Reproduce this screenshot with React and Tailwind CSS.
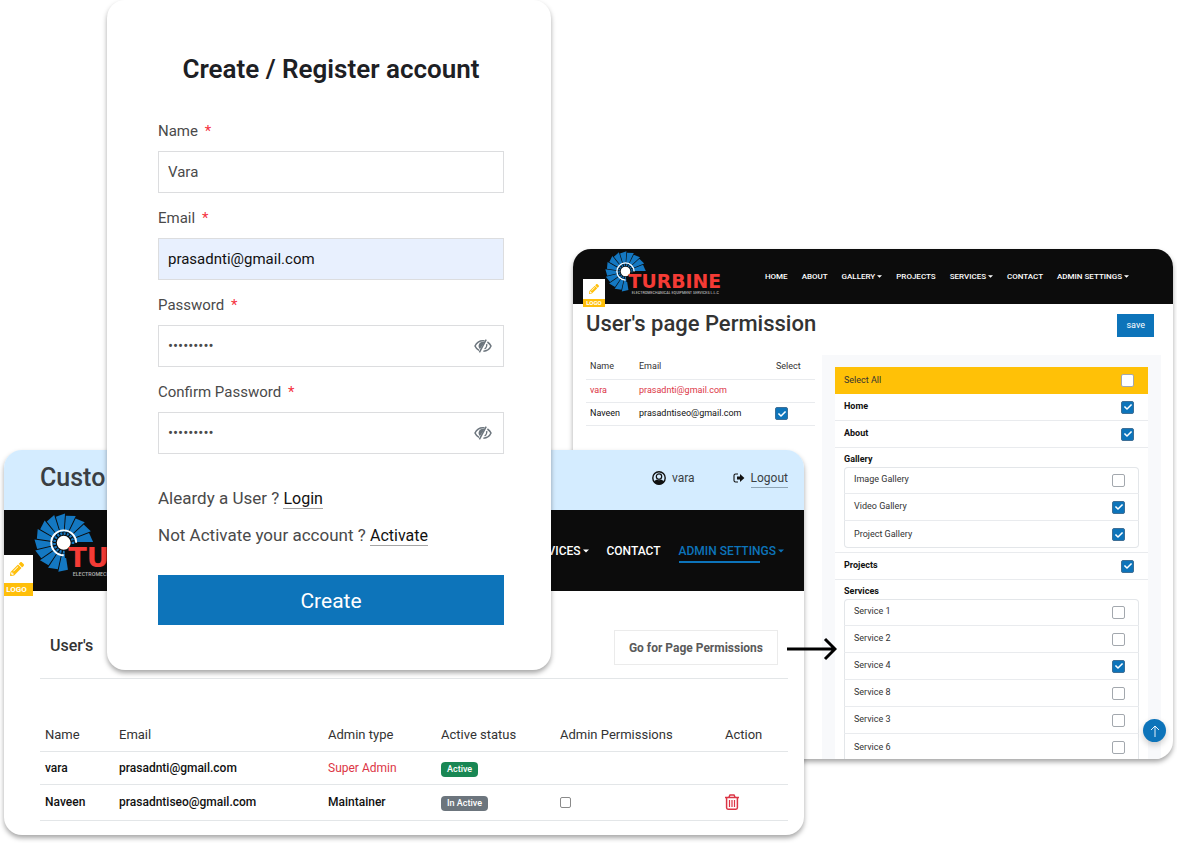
import React, { useState } from 'react';
import { FaCheck, FaPencilAlt } from 'react-icons/fa';

const galleryPages = [
  { name: 'Image Gallery', checked: false },
  { name: 'Video Gallery', checked: true },
  { name: 'Project Gallery', checked: true },
];

const servicePages = [
  { name: 'Service 1', checked: false },
  { name: 'Service 2', checked: false },
  { name: 'Service 4', checked: true },
  { name: 'Service 8', checked: false },
  { name: 'Service 3', checked: false },
  { name: 'Service 6', checked: false },
];

const navLinks = [
  { name: 'HOME' },
  { name: 'ABOUT' },
  { name: 'GALLERY', menu: true },
  { name: 'PROJECTS' },
  { name: 'SERVICES', menu: true },
  { name: 'CONTACT' },
  { name: 'ADMIN SETTINGS', menu: true },
];

const TurbineLogo = ({ className }) => {
  const blades = [];
  for (let i = 0; i < 13; i++) {
    blades.push(
      <path
        key={i}
        d="M262 200 L408 200 L380 138 L259 184 Z"
        transform={`rotate(${-i * 21.5} 205 205)`}
        fill="#1478c2"
      />
    );
  }

  return (
    <svg viewBox="0 0 1180 440" className={className} role="img" aria-label="Turbine">
      {blades}
      <circle cx="205" cy="205" r="76" fill="#0c0c0c" />
      <path d="M205 291 A86 86 0 1 1 291 205" fill="none" stroke="#fff" strokeWidth="13" />
      <circle
        cx="205"
        cy="205"
        r="64"
        fill="none"
        stroke="#1478c2"
        strokeWidth="18"
        strokeDasharray="14 9"
      />
      <path d="M213 213 H310 V310 H213 Z" fill="#0c0c0c" />
      <circle cx="205" cy="205" r="48" fill="#fff" />
      <text
        x="236"
        y="374"
        fontSize="188"
        fontWeight="900"
        fill="#f53b35"
        className="font-['DejaVu_Sans',sans-serif]"
      >
        TURBINE
      </text>
      <text x="267" y="431" fontSize="37" fill="#b5b5b5" className="font-['Roboto',sans-serif]">
        ELECTROMECHANICAL EQUIPMENT SERVICES L.L.C
      </text>
    </svg>
  );
};

const Caret = ({ className }) => (
  <svg viewBox="0 0 8 4" className={className} aria-hidden="true">
    <path d="M0 0 H8 L4 4 Z" fill="currentColor" />
  </svg>
);

const EyeSlash = () => (
  <svg viewBox="0 0 18 14" className="h-[14px] w-[18px]" fill="none" stroke="currentColor" aria-hidden="true">
    <path d="M10.6 2 C9.8 1.8 9.4 1.8 9 1.8 C5 1.8 2.2 4.4 1 7 C1.8 8.9 3.2 10.4 5 11.3" strokeWidth="1.5" />
    <path d="M13.4 3 C15 4 16.3 5.4 17 7 C15.8 9.8 13 12 9.4 12.2" strokeWidth="1.5" />
    <path d="M5.4 4.4 C4 6.2 4.4 8.6 6 10 L10.6 3.2 C8.8 2.6 6.6 2.8 5.4 4.4 Z" fill="currentColor" stroke="none" />
    <path d="M12.2 0.6 L5.4 13.4" strokeWidth="1.5" />
    <path d="M12.8 5 C13 7 12.2 8.8 10.6 10" strokeWidth="1.2" />
  </svg>
);

const TrashIcon = () => (
  <svg viewBox="0 0 14 16" className="h-4 w-[14px]" fill="none" stroke="currentColor" aria-hidden="true">
    <path d="M0 3.5 H14 M4 3 L5 1 H9 L10 3" strokeWidth="1.5" />
    <path d="M1.6 4 V13.8 Q1.6 15.2 3 15.2 H11 Q12.4 15.2 12.4 13.8 V4" strokeWidth="1.5" />
    <path d="M4.5 6 V13 M7 6 V13 M9.5 6 V13" strokeWidth="1.2" />
  </svg>
);

const Tick = ({ label, defaultChecked }) => (
  <span className="grid shrink-0 place-items-center">
    <input
      type="checkbox"
      aria-label={label}
      defaultChecked={defaultChecked}
      className="peer col-start-1 row-start-1 h-[13px] w-[13px] appearance-none rounded-[2px] border border-[#a3a8ae] bg-white checked:border-[#3f6f96] checked:bg-[#0d74ba]"
    />
    <FaCheck className="pointer-events-none invisible col-start-1 row-start-1 h-2 w-2 text-white peer-checked:visible" />
  </span>
);

const Field = ({ id, label, type = 'text', value, filled }) => {
  const [text, setText] = useState(value);
  const [shown, setShown] = useState(false);
  const isPassword = type === 'password';

  return (
    <div className="mb-[13px]">
      <label htmlFor={id} className="mb-2 block text-[15px] leading-6 text-[#4a4a4a]">
        {label} <span className="ml-[3px] text-[#f5333f]">*</span>
      </label>
      <div className="relative">
        <input
          id={id}
          type={isPassword && shown ? 'text' : type}
          value={text}
          onChange={(e) => setText(e.target.value)}
          className={`block h-[42px] w-full border border-[#dcdddf] px-[9px] text-[15px] ${
            filled ? 'bg-[#e8f0fe] text-[#111]' : 'bg-white text-[#4a4a4a]'
          }`}
        />
        {isPassword && (
          <button
            type="button"
            aria-label="Show password"
            onClick={() => setShown(!shown)}
            className="absolute top-[14px] right-3 text-[#6c757d]"
          >
            <EyeSlash />
          </button>
        )}
      </div>
    </div>
  );
};

const RegisterCard = () => (
  <section className="z-20 col-start-3 row-start-1 self-start rounded-[18px] bg-white pt-[53px] pr-[47px] pb-[45px] pl-[51px] shadow-[0_3px_5px_rgba(0,0,0,0.35)]">
    <h1 className="mb-[34px] text-center text-[26px] leading-8 font-semibold text-[#1d2024]">
      Create / Register account
    </h1>
    <form onSubmit={(e) => e.preventDefault()}>
      <Field id="name" label="Name" value="Vara" />
      <Field id="email" label="Email" type="email" value="prasadnti@gmail.com" filled />
      <Field id="password" label="Password" type="password" value="prasadnti" />
      <Field id="confirm" label="Confirm Password" type="password" value="prasadnti" />
      <div className="mt-[26px] text-[17px] leading-9 text-[#4a4a4a]">
        <p>
          Aleardy a User ?{' '}
          <a href="#login" className="border-b border-[#a5a5a5] text-[16px] text-[#111]">Login</a>
        </p>
        <p>
          Not Activate your account ?{' '}
          <a href="#activate" className="border-b border-[#a5a5a5] text-[16px] text-[#111]">Activate</a>
        </p>
      </div>
      <button type="submit" className="mt-[21px] h-[50px] w-full bg-[#0d74ba] pt-[3px] text-[21px] text-white">
        Create
      </button>
    </form>
  </section>
);

const CustomerCard = () => (
  <section className="relative z-10 col-span-4 col-start-2 row-start-1 mt-[450px] self-start rounded-[18px] bg-white pb-[14px] text-[12px] shadow-[0_3px_5px_rgba(0,0,0,0.35)]">
    <header className="flex h-[60px] items-center rounded-t-[18px] bg-[#d4ecff] pr-4 pb-1 pl-9 text-[#3a3f44]">
      <h2 className="mr-auto text-[25px] font-medium">Custo</h2>
      <svg viewBox="0 0 14 14" className="mr-[6px] h-[14px] w-[14px]" aria-hidden="true">
        <circle cx="7" cy="7" r="6.2" fill="#d4ecff" stroke="#111" strokeWidth="1.4" />
        <path d="M1.8 9 C3 13 11 13 12.2 9 L11 12 Q7 15 3 12 Z" fill="#111" />
        <path d="M2.2 10.6 C3.2 9.2 4.4 8.8 5.2 8.6 C6.4 9.4 7.6 9.4 8.8 8.6 C9.6 8.8 10.8 9.2 11.8 10.6 C9.4 13.8 4.6 13.8 2.2 10.6 Z" fill="#111" />
        <circle cx="7" cy="5.6" r="2.7" fill="none" stroke="#111" strokeWidth="1.2" />
      </svg>
      <span className="mr-[38px]">vara</span>
      <svg viewBox="0 0 12 10" className="mr-[6px] h-[10px] w-3" aria-hidden="true">
        <path d="M5 1 H2.6 Q1 1 1 2.6 V7.4 Q1 9 2.6 9 H5" fill="none" stroke="#111" strokeWidth="1.1" />
        <path d="M4 3.4 H7 V1 L11.4 5 L7 9 V6.6 H4 Z" fill="#111" />
      </svg>
      <a href="#logout" className="border-b border-[#8fa5b5]">Logout</a>
    </header>

    <nav className="flex h-[81px] items-center justify-end bg-[#0c0c0c] pr-5 pl-[30px] font-medium text-white">
      <TurbineLogo className="mr-auto mb-3 h-[64px] w-[171px]" />
      <a href="#services" className="mr-[18px] flex items-center gap-[2px]">
        SERVICES <Caret className="h-1 w-[6px]" />
      </a>
      <a href="#contact" className="mr-[18px]">CONTACT</a>
      <a href="#admin" className="flex items-center gap-[2px] text-[#0d74ba]">
        <span className="relative">
          ADMIN SETTINGS
          <span className="absolute -bottom-[3px] left-0 h-[2px] w-5/6 bg-[#0d74ba]" />
        </span>
        <Caret className="h-1 w-[6px]" />
      </a>
    </nav>

    <button type="button" aria-label="Edit logo" className="absolute top-[105px] left-0 w-[29px]">
      <span className="flex h-7 items-center justify-center bg-white pr-1">
        <FaPencilAlt className="h-[14px] w-[14px] text-[#ffbf0a]" />
      </span>
      <span className="block bg-[#ffbf0a] pr-1 text-[8px] leading-[13px] font-bold text-white">LOGO</span>
    </button>

    <div className="pt-[39px] pr-4 pl-9">
      <div className="flex items-center justify-between border-b border-[#e3e6e8] px-[10px] pb-[13px]">
        <h3 className="pb-1 text-[16px] font-medium text-[#333]">User's</h3>
        <button type="button" className="h-[35px] border border-[#ebebeb] px-[14px] font-bold text-[#5a5a5a]">
          Go for Page Permissions
        </button>
      </div>
    </div>

    <div className="pt-[39px] pr-4 pl-9">
      <table className="w-full table-fixed text-left text-[#111]">
        <colgroup>
          <col className="w-[74px]" />
          <col className="w-[209px]" />
          <col className="w-[113px]" />
          <col className="w-[119px]" />
          <col className="w-[165px]" />
          <col />
        </colgroup>
        <thead>
          <tr className="h-[33px] border-b border-[#e3e6e8] text-[13px] text-[#333]">
            <th className="pl-[5px] font-normal">Name</th>
            <th className="pl-[5px] font-normal">Email</th>
            <th className="pl-[5px] font-normal">Admin type</th>
            <th className="pl-[5px] font-normal">Active status</th>
            <th className="pl-[5px] font-normal">Admin Permissions</th>
            <th className="pl-[5px] font-normal">Action</th>
          </tr>
        </thead>
        <tbody className="font-medium">
          <tr className="h-[33px] border-b border-[#e3e6e8]">
            <td className="pl-[5px]">vara</td>
            <td className="pl-[5px]">prasadnti@gmail.com</td>
            <td className="pl-[5px] font-normal text-[#dc3545]">Super Admin</td>
            <td className="pl-[5px]">
              <span className="inline-block rounded-[4px] bg-[#198754] px-[6px] text-[9px] leading-[15px] text-white">Active</span>
            </td>
            <td />
            <td />
          </tr>
          <tr className="h-[36px] border-b border-[#e3e6e8]">
            <td className="pl-[5px]">Naveen</td>
            <td className="pl-[5px]">prasadntiseo@gmail.com</td>
            <td className="pl-[5px]">Maintainer</td>
            <td className="pl-[5px]">
              <span className="inline-block rounded-[4px] bg-[#6c757d] px-[6px] text-[9px] leading-[15px] text-white">In Active</span>
            </td>
            <td className="pl-[5px]">
              <input
                type="checkbox"
                aria-label="Admin permission for Naveen"
                className="block h-[11px] w-[11px] appearance-none rounded-[2px] border border-[#8a8a8a] bg-white checked:bg-[#0d74ba]"
              />
            </td>
            <td className="pl-[5px]">
              <button type="button" aria-label="Delete Naveen" className="block text-[#dc3545]">
                <TrashIcon />
              </button>
            </td>
          </tr>
        </tbody>
      </table>
    </div>

    <svg viewBox="0 0 50 24" className="absolute top-[187px] -right-[33px] h-6 w-[50px]" aria-hidden="true">
      <path d="M0 12 H48 M38 2 L48 12 L38 22" fill="none" stroke="#000" strokeWidth="3" />
    </svg>
  </section>
);

const PageGroup = ({ title, pages, open }) => (
  <div className={`bg-white px-[9px] ${open ? '' : 'border-b border-[#e9ebee] pb-1'}`}>
    <h4 className="pt-[5px] pb-[2px] leading-3 font-bold text-[#111]">{title}</h4>
    <ul className={`ring-1 ring-[#e3e6e9] ring-inset ${open ? '-mb-[2px] rounded-t-[4px]' : 'rounded-[4px]'}`}>
      {pages.map((page) => (
        <li
          key={page.name}
          className="flex h-[27px] items-center justify-between border-b border-[#e9ebee] pr-[14px] pl-[10px] last:border-b-0"
        >
          <span>{page.name}</span>
          <Tick label={page.name} defaultChecked={page.checked} />
        </li>
      ))}
    </ul>
  </div>
);

const PageRow = ({ name }) => (
  <div className="flex h-[27px] items-center justify-between border-b border-[#e9ebee] bg-white pr-[14px] pl-[9px]">
    <span className="font-bold text-[#111]">{name}</span>
    <Tick label={name} defaultChecked />
  </div>
);

const PermissionCard = () => (
  <section className="relative col-span-2 col-start-5 row-start-1 mt-[249px] self-start overflow-hidden rounded-[18px] bg-white text-[9px] text-[#333] shadow-[0_3px_5px_rgba(0,0,0,0.35)]">
    <nav className="flex h-[55px] items-center gap-[14px] bg-[#0c0c0c] pr-[44px] pl-8 text-[8px] font-medium text-white">
      <TurbineLogo className="mr-auto mb-2 h-11 w-[118px]" />
      {navLinks.map((link) => (
        <a key={link.name} href="#nav" className="flex items-center gap-[2px] whitespace-nowrap">
          {link.name}
          {link.menu && <Caret className="h-[3px] w-[5px]" />}
        </a>
      ))}
    </nav>

    <button type="button" aria-label="Edit logo" className="absolute top-[30px] left-[10px] w-[22px]">
      <span className="flex h-5 items-center justify-center bg-white">
        <FaPencilAlt className="h-[10px] w-[10px] text-[#ffbf0a]" />
      </span>
      <span className="block bg-[#ffbf0a] text-[6px] leading-[8px] font-bold text-white">LOGO</span>
    </button>

    <div className="flex items-start justify-between pt-[6px] pr-[19px] pl-[13px]">
      <h2 className="text-[22px] leading-[28px] font-medium">User's page Permission</h2>
      <button type="button" className="mt-1 h-[23px] bg-[#0d74ba] px-[9px] text-white">save</button>
    </div>

    <div className="flex gap-[7px] pt-[17px] pr-3 pl-[13px]">
      <div className="flex-1">
        <table className="w-full table-fixed text-left">
          <colgroup>
            <col className="w-[49px]" />
            <col className="w-[137px]" />
            <col />
          </colgroup>
          <thead>
            <tr className="h-6 border-b border-[#e9ebee]">
              <th className="pl-1 font-normal">Name</th>
              <th className="pl-1 font-normal">Email</th>
              <th className="pl-1 font-normal">Select</th>
            </tr>
          </thead>
          <tbody>
            <tr className="h-[23px] border-b border-[#e9ebee] text-[#dc3545]">
              <td className="pl-1">vara</td>
              <td className="pl-1">prasadnti@gmail.com</td>
              <td />
            </tr>
            <tr className="h-[23px] border-b border-[#e9ebee] text-[#111]">
              <td className="pl-1">Naveen</td>
              <td className="pl-1">prasadntiseo@gmail.com</td>
              <td className="pl-[3px]">
                <div className="flex">
                  <Tick label="Select Naveen" defaultChecked />
                </div>
              </td>
            </tr>
          </tbody>
        </table>
      </div>

      <div className="w-[339px] bg-[#f8f9fb] px-[13px] pt-3">
        <div className="flex h-[27px] items-center justify-between bg-[#ffc107] pr-[14px] pl-[9px]">
          <span>Select All</span>
          <Tick label="Select All" />
        </div>
        <PageRow name="Home" />
        <PageRow name="About" />
        <PageGroup title="Gallery" pages={galleryPages} />
        <PageRow name="Projects" />
        <PageGroup title="Services" pages={servicePages} open />
      </div>
    </div>

    <button
      type="button"
      aria-label="Back to top"
      className="absolute right-[7px] bottom-[17px] grid h-[23px] w-[23px] place-items-center rounded-full bg-[#0d74ba] shadow-[0_3px_6px_rgba(0,0,0,0.2)]"
    >
      <svg viewBox="0 0 12 12" className="h-3 w-3" aria-hidden="true">
        <path d="M6 12 V1 M2 5 L6 1 L10 5" fill="none" stroke="#fff" strokeWidth="0.9" />
      </svg>
    </button>
  </section>
);

const App = () => {
  return (
    <main className="grid grid-cols-[4fr_103fr_444fr_22fr_231fr_369fr_4fr] bg-white pb-2 font-['Roboto',sans-serif]">
      <RegisterCard />
      <CustomerCard />
      <PermissionCard />
    </main>
  );
};

export default App;
